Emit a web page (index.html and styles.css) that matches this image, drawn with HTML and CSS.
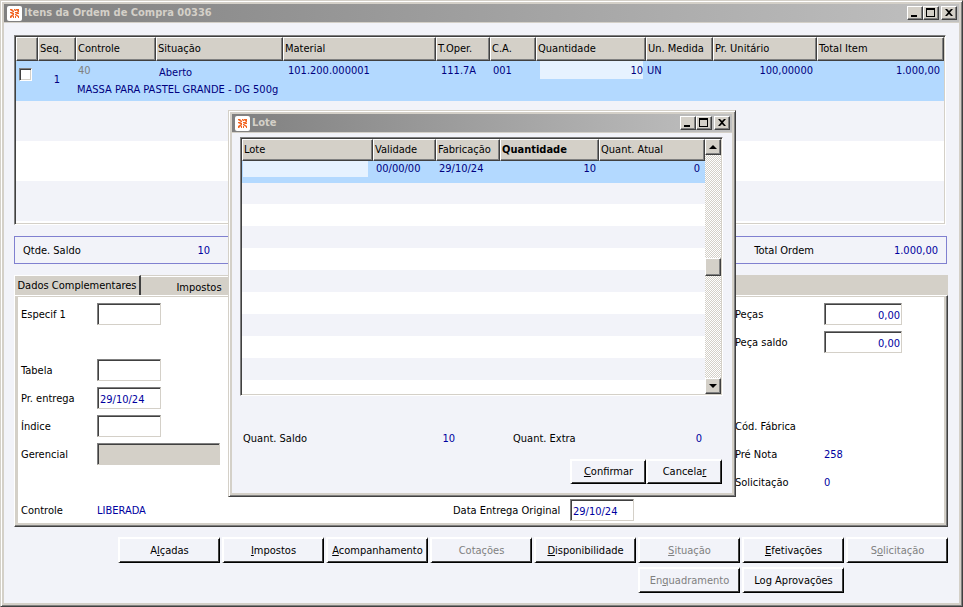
FILE: index.html
```html
<!DOCTYPE html>
<html lang="pt-br">
<head>
	<meta charset="utf-8">
	<title>Itens da Ordem de Compra 00336</title>
	<link rel="stylesheet" href="styles.css">
</head>
<body>
	<div class="window main">
		<div class="titlebar">
			<svg class="logo" viewBox="0 0 15 15"><path d="M3 3h2l2 2v1h-1l-3-2zM7 3h1l1 1v1h-1l-1-1zM9 3h3v3h-1l-2-2zM3 6h2l2 1v1h-2l-2-1zM8 6h3l1 1v1h-2l-2-1zM3 10l3-2h1v1l-3 3h-1zM8 8h1l3 2v2h-1v-1l-3-2zM6 10h1v2h-1zM8 10h1v2h-1z"/></svg>
			<h1>Itens da Ordem de Compra 00336</h1>
			<div class="controls">
				<button aria-label="Minimizar"><svg viewBox="0 0 12 10"><path d="M2 7h6v2h-6z"/></svg></button>
				<button aria-label="Maximizar"><svg viewBox="0 0 12 10"><path d="M1 0h9v9h-9zM2 2v6h7v-6z" fill-rule="evenodd"/></svg></button>
				<button class="close" aria-label="Fechar"><svg viewBox="0 0 12 10"><path d="M2 1h2l2 2 2-2h2l-3 3.500 3 3.500h-2l-2-2-2 2h-2l3-3.500z"/></svg></button>
			</div>
		</div>
		<div class="content">
			<!-- itens da ordem -->
			<div class="grid itens">
				<table>
					<colgroup>
						<col class="c-sel"><col class="c-seq"><col class="c-ctrl"><col class="c-sit"><col><col class="c-oper"><col class="c-ca"><col class="c-qtd"><col class="c-un"><col class="c-pr"><col class="c-total">
					</colgroup>
					<thead>
						<tr><th></th><th>Seq.</th><th>Controle</th><th>Situação</th><th>Material</th><th>T.Oper.</th><th>C.A.</th><th>Quantidade</th><th>Un. Medida</th><th>Pr. Unitário</th><th>Total Item</th></tr>
					</thead>
					<tbody>
						<tr>
							<td class="sel" rowspan="2"><input type="checkbox" aria-label="Selecionar item"></td>
							<td class="seq" rowspan="2">1</td>
							<td class="off">40</td>
							<td class="sit">Aberto</td>
							<td class="pad">101.200.000001</td>
							<td class="pad">111.7A</td>
							<td>001</td>
							<td class="edit"><input class="cell num" type="text" value="10" aria-label="Quantidade"></td>
							<td class="un">UN</td>
							<td class="num">100,00000</td>
							<td class="num">1.000,00</td>
						</tr>
						<tr><td class="desc" colspan="9">MASSA PARA PASTEL GRANDE - DG 500g</td></tr>
					</tbody>
				</table>
			</div>
			<!-- totais -->
			<div class="totais">
				<span>Qtde. Saldo</span><span class="valor num">10</span>
				<span class="ordem">Total Ordem</span><span class="valor num">1.000,00</span>
			</div>
			<!-- abas -->
			<div class="abas">
				<button class="aba ativa">Dados Complementares</button><button class="aba">Impostos</button>
			</div>
			<div class="painel">
				<div class="linha">
					<label for="especif">Especif 1</label><input id="especif" type="text">
					<label class="dir" for="pecas">Peças</label><input class="num" id="pecas" type="text" value="0,00">
				</div>
				<div class="linha">
					<label class="dir" for="saldo">Peça saldo</label><input class="num" id="saldo" type="text" value="0,00">
				</div>
				<div class="linha">
					<label for="tabela">Tabela</label><input id="tabela" type="text">
				</div>
				<div class="linha">
					<label for="entrega">Pr. entrega</label><input id="entrega" type="text" value="29/10/24">
				</div>
				<div class="linha">
					<label for="indice">Índice</label><input id="indice" type="text">
					<span class="dir">Cód. Fábrica</span>
				</div>
				<div class="linha">
					<label for="gerencial">Gerencial</label><input class="largo" id="gerencial" type="text" disabled>
					<span class="dir">Pré Nota</span><span class="valor">258</span>
				</div>
				<div class="linha">
					<span class="dir">Solicitação</span><span class="valor">0</span>
				</div>
				<div class="linha">
					<span>Controle</span><span class="valor">LIBERADA</span>
					<label class="meio" for="original">Data Entrega Original</label><input id="original" type="text" value="29/10/24">
				</div>
			</div>
			<div class="acoes">
				<button class="btn">A<u>l</u>çadas</button>
				<button class="btn"><u>I</u>mpostos</button>
				<button class="btn"><u>A</u>companhamento</button>
				<button class="btn" disabled>Cotações</button>
				<button class="btn"><u>D</u>isponibilidade</button>
				<button class="btn" disabled><u>S</u>ituação</button>
				<button class="btn"><u>E</u>fetivações</button>
				<button class="btn" disabled>S<u>o</u>licitação</button>
				<button class="btn enq" disabled>En<u>q</u>uadramento</button>
				<button class="btn">Log Aprovações</button>
			</div>
		</div>
	</div>

	<!-- janela de lote -->
	<div class="window lote" role="dialog" aria-label="Lote">
		<div class="titlebar">
			<svg class="logo" viewBox="0 0 15 15"><path d="M3 3h2l2 2v1h-1l-3-2zM7 3h1l1 1v1h-1l-1-1zM9 3h3v3h-1l-2-2zM3 6h2l2 1v1h-2l-2-1zM8 6h3l1 1v1h-2l-2-1zM3 10l3-2h1v1l-3 3h-1zM8 8h1l3 2v2h-1v-1l-3-2zM6 10h1v2h-1zM8 10h1v2h-1z"/></svg>
			<h1>Lote</h1>
			<div class="controls">
				<button aria-label="Minimizar"><svg viewBox="0 0 12 10"><path d="M2 7h6v2h-6z"/></svg></button>
				<button aria-label="Maximizar"><svg viewBox="0 0 12 10"><path d="M1 0h9v9h-9zM2 2v6h7v-6z" fill-rule="evenodd"/></svg></button>
				<button class="close" aria-label="Fechar"><svg viewBox="0 0 12 10"><path d="M2 1h2l2 2 2-2h2l-3 3.500 3 3.500h-2l-2-2-2 2h-2l3-3.500z"/></svg></button>
			</div>
		</div>
		<div class="lote-corpo">
			<div class="grid lotes">
				<table>
					<colgroup><col><col class="l-val"><col class="l-fab"><col class="l-qtd"><col class="l-atual"></colgroup>
					<thead>
						<tr><th>Lote</th><th>Validade</th><th>Fabricação</th><th class="forte">Quantidade</th><th>Quant. Atual</th></tr>
					</thead>
					<tbody>
						<tr><td class="edit"><input class="cell" type="text" aria-label="Lote"></td><td>00/00/00</td><td>29/10/24</td><td class="num">10</td><td class="num">0</td></tr>
					</tbody>
				</table>
				<div class="barra">
					<button aria-label="Subir"><svg viewBox="0 0 12 12"><path d="M6 4l4 4h-8z"/></svg></button>
					<div class="trilho"><div class="polegar"></div></div>
					<button aria-label="Descer"><svg viewBox="0 0 12 12"><path d="M6 8l4-4h-8z"/></svg></button>
				</div>
			</div>
			<div class="lote-totais">
				<span>Quant. Saldo</span><span class="valor num">10</span>
				<span class="extra">Quant. Extra</span><span class="valor num">0</span>
			</div>
			<div class="lote-acoes">
				<button class="btn"><u>C</u>onfirmar</button>
				<button class="btn">Cancela<u>r</u></button>
			</div>
		</div>
	</div>
</body>
</html>
```

FILE: styles.css
```css
*{margin: 0;padding: 0;box-sizing: border-box;}
body{
	min-height: 100vh;
	display: flex;
	background: #f2f3f9;
	color: #000;
}
body, button, input{
	font: 11px/14px Tahoma, "DejaVu Sans Condensed", "DejaVu Sans", sans-serif;
}
.num{text-align: right;}
.valor{color: #0000a0;}

/* janelas */
.window{
	background: #f2f3f9;
	border: 1px solid #d4d0c8;
	border-right-color: #404040;
	border-bottom-color: #404040;
	padding: 3px;
	box-shadow: inset 1px 1px #fff, inset -1px -1px #808080, inset 0 0 0 3px #d4d0c8;
}
.main{flex: 1;}
.titlebar{
	display: flex;
	align-items: center;
	height: 19px;
	padding: 0 2px 0 3px;
	background: linear-gradient(to right, #808080, #c0c0c0);
	border-bottom: 1px solid #d4d0c8;
}
.titlebar h1{
	flex: 1;
	margin-left: 2px;
	font-size: 11px;
	line-height: 18px;
	color: #d4d0c8;
}
.logo{
	width: 15px;
	height: 15px;
	background: #fff;
	border-radius: 2px;
	fill: #f26522;
}
.controls{display: flex;}
.controls button, .barra button, .polegar{
	background: #d4d0c8;
	border: 1px solid #fff;
	border-right-color: #404040;
	border-bottom-color: #404040;
	box-shadow: inset -1px -1px #808080;
}
.controls button{
	width: 16px;
	height: 14px;
}
.controls .close{margin-left: 2px;}
.controls svg{
	display: block;
	width: 12px;
	height: 10px;
	margin-left: 1px;
}
.content{padding: 12px 11px 10px 10px;}

/* tabelas */
.grid{
	border: 1px solid #808080;
	border-right-color: #fff;
	border-bottom-color: #fff;
	padding: 1px;
	box-shadow: inset 1px 1px #404040, inset -1px -1px #d4d0c8;
}
table{
	width: 100%;
	table-layout: fixed;
	border-spacing: 0;
}
th{
	padding-left: 1px;
	background: #d4d0c8;
	border: 1px solid #fff;
	border-right-color: #404040;
	border-bottom-color: #404040;
	box-shadow: inset -1px -1px #808080;
	font-weight: normal;
	text-align: left;
	white-space: nowrap;
}
.forte{font-weight: bold;}
tbody tr{background: #b3d9ff;}
td{
	padding: 0 3px;
	color: #000080;
	vertical-align: top;
	white-space: nowrap;
}
.cell{
	display: block;
	width: 100%;
	border: 0;
	background: #e6f2ff;
	color: #000080;
}
.itens{
	height: 190px;
	margin-right: 2px;
	background: repeating-linear-gradient(#fff 0 40px, #f2f3f9 40px 80px) 0 25px;
}
.itens th{height: 24px;}
.itens td{
	height: 20px;
	padding-top: 3px;
}
.itens td.num{padding-right: 4px;}
.c-sel{width: 22px;}
.c-seq{width: 38px;}
.c-ctrl{width: 80px;}
.c-sit{width: 127px;}
.c-oper{width: 54px;}
.c-ca{width: 46px;}
.c-qtd{width: 110px;}
.c-un{width: 67px;}
.c-pr{width: 104px;}
.c-total{width: 127px;}
.itens .sel{padding: 7px 3px 0;}
.sel input{
	appearance: none;
	display: block;
	width: 13px;
	height: 13px;
	background: #fff;
	border: 1px solid #808080;
	border-right-color: #fff;
	border-bottom-color: #fff;
	box-shadow: inset 1px 1px #404040, inset -1px -1px #d4d0c8;
}
.itens .seq{
	padding-top: 12px;
	text-align: center;
}
.itens .off{
	padding-left: 2px;
	color: #808080;
}
.itens .sit{padding-top: 5px;}
td.pad{padding-left: 5px;}
.itens .un{padding-left: 1px;}
.itens .edit{padding: 0 3px 0 4px;}
.itens .cell{height: 18px;}
.itens .desc{padding: 2px 3px 0 1px;}

/* totais */
.totais{
	display: flex;
	margin: 11px 1px 0 0;
	padding: 7px 8px 5px;
	border: 1px solid #8080d0;
}
.totais .valor{width: 120px;}
.totais span:first-child{width: 67px;}
.ordem{margin-left: auto;}
.totais .ordem + .valor{width: 124px;}

/* abas */
.abas{
	display: flex;
	align-items: flex-end;
	margin-top: 11px;
	height: 20px;
	background: #d4d0c8;
}
.aba{
	height: 19px;
	padding: 3px 6px 0;
	background: #d4d0c8;
	border: 0;
	border-top: 1px solid #fff;
	width: 116px;
	white-space: nowrap;
}
.ativa{
	width: 127px;
	height: 20px;
	padding: 0 2px;
	border-left: 1px solid #fff;
	border-right: 2px solid #404040;
}
.painel{
	padding: 7px 5px 5px 6px;
	background: #fff;
	border: 1px solid #fff;
	border-right-color: #404040;
	border-bottom-color: #404040;
	box-shadow: inset -1px -1px #808080, inset 3px 1px #d4d0c8, inset -3px -3px #d4d0c8;
}
.linha{
	display: grid;
	grid-template-columns: 76px 356px 117px 1fr 89px 118px;
	height: 28px;
	align-items: start;
}
.linha:last-child{height: 22px;}
.linha > *{grid-row: 1;}
.linha span, .linha label{margin-top: 5px;}
.linha .meio{grid-column: 3;}
.linha .dir{grid-column: 5;}
.linha .dir + *{grid-column: 6;}
.linha input{
	width: 64px;
	height: 22px;
	padding: 3px 1px 0 2px;
	color: #0000a0;
	background: #fff;
	border: 1px solid #808080;
	border-right-color: #d4d0c8;
	border-bottom-color: #d4d0c8;
	box-shadow: inset 1px 1px #404040;
}
.linha input.num{width: 78px;}
.linha input.largo{
	width: 123px;
	background: #d4d0c8;
}

/* botoes */
.btn{
	height: 26px;
	background: #f2f3f9;
	border: 2px solid #fff;
	border-right: 1px solid #000;
	border-bottom: 1px solid #000;
	box-shadow: inset -1px -1px #404040;
}
.btn:disabled{color: #808080;}
.acoes{
	display: grid;
	grid-template-columns: repeat(8, 102px);
	justify-content: end;
	gap: 4px 2px;
	margin-top: 10px;
}
.enq{grid-column: 6;}

/* lote */
.lote{
	position: absolute;
	left: 228px;
	top: 110px;
	width: 508px;
}
.lote-corpo{padding: 4px 9px 9px 8px;}
.lotes{
	display: flex;
	height: 259px;
	background: repeating-linear-gradient(#f2f3f9 0 22px, #fff 22px 44px) 0 44px;
}
.lotes table{
	flex: 1;
	align-self: flex-start;
}
.lotes th{height: 22px;}
.lotes td{
	height: 22px;
	padding: 1px 3px 0;
}
.lotes td:last-child{padding-right: 5px;}
.lotes .edit{padding: 0 5px 0 1px;}
.lotes .cell{height: 16px;}
.l-val{width: 63px;}
.l-fab{width: 64px;}
.l-qtd{width: 99px;}
.l-atual{width: 106px;}
.barra{
	display: flex;
	flex-direction: column;
	width: 16px;
}
.barra button{height: 16px;}
.barra svg{
	display: block;
	width: 12px;
	height: 12px;
	margin-left: 1px;
}
.trilho{
	flex: 1;
	display: flex;
	flex-direction: column;
	justify-content: center;
	background: repeating-conic-gradient(#d4d0c8 0 25%, #fff 0 50%) 0 0 / 2px 2px;
}
.polegar{height: 18px;}
.lote-totais{
	display: flex;
	margin-top: 36px;
	padding: 0 21px 0 3px;
}
.lote-totais span:first-child{width: 72px;}
.lote-totais .valor{width: 140px;}
.lote-totais .extra{margin-left: 58px;}
.lote-totais .extra + .valor{
	flex: 1;
	width: auto;
}
.lote-acoes{
	display: flex;
	justify-content: flex-end;
	margin-top: 13px;
	padding-right: 1px;
}
.lote-acoes .btn{
	width: 76px;
	height: 25px;
}
```
